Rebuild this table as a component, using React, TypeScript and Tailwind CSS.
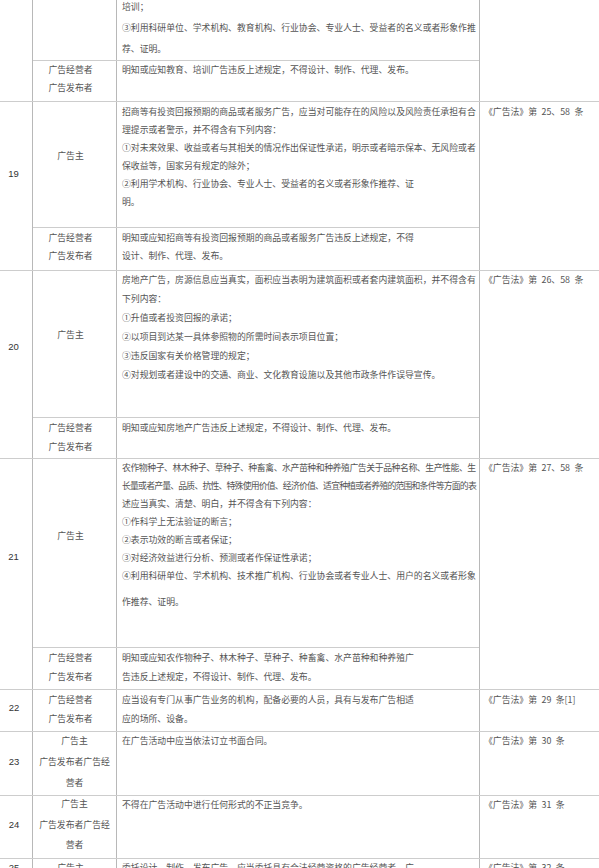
import React from "react";

const txt = "text-[8.85px] text-[#555] whitespace-nowrap";
const sp = "\u2002";

export default function App() {
  return (
    <div className="w-[599px] overflow-hidden bg-white font-['Noto_Sans_CJK_SC','Noto_Sans_CJK_JP',sans-serif]">
      <div className="w-[680px] flex flex-col">
        {/* Group 18 tail */}
        <div className="flex">
          <div className="w-[33px] shrink-0 border-r border-r-[#b8b8b8]" />
          <div className="w-[447px] shrink-0 border-r border-r-[#b8b8b8] flex flex-col">
            <div className="flex h-[60px]">
              <div className="w-[84px] shrink-0 border-r border-r-[#b8b8b8]" />
              <div className={`flex-1 pl-[5px] leading-[21px] -mt-[4px] ${txt}`}>
                <div>培训；</div>
                <div>③利用科研单位、学术机构、教育机构、行业协会、专业人士、受益者的名义或者形象作推</div>
                <div>荐、证明。</div>
              </div>
            </div>
            <div className="flex h-[41px] border-t border-t-[#cdcdcd]">
              <div className={`w-[84px] shrink-0 border-r border-r-[#b8b8b8] text-center pr-[8px] leading-[18px] ${txt}`}>
                <div>广告经营者</div>
                <div>广告发布者</div>
              </div>
              <div className={`flex-1 pl-[5px] leading-[18px] ${txt}`}>
                <div>明知或应知教育、培训广告违反上述规定，不得设计、制作、代理、发布。</div>
              </div>
            </div>
          </div>
          <div className="flex-1" />
        </div>

        {/* Group 19 */}
        <div className="flex border-t border-t-[#cdcdcd]">
          <div className="w-[33px] shrink-0 border-r border-r-[#b8b8b8] text-center pr-[5px] pt-[63px] leading-[18px] text-[9.5px] text-[#333] font-['Liberation_Sans',sans-serif]">19</div>
          <div className="w-[447px] shrink-0 border-r border-r-[#b8b8b8] flex flex-col">
            <div className="flex h-[125px]">
              <div className={`w-[84px] shrink-0 border-r border-r-[#b8b8b8] text-center pr-[8px] pt-[45px] leading-[18px] ${txt}`}>广告主</div>
              <div className={`flex-1 pl-[5px] pt-[1px] leading-[18px] ${txt}`}>
                <div>招商等有投资回报预期的商品或者服务广告，应当对可能存在的风险以及风险责任承担有合</div>
                <div>理提示或者警示，并不得含有下列内容：</div>
                <div>①对未来效果、收益或者与其相关的情况作出保证性承诺，明示或者暗示保本、无风险或者</div>
                <div>保收益等，国家另有规定的除外；</div>
                <div>②利用学术机构、行业协会、专业人士、受益者的名义或者形象作推荐、证</div>
                <div>明。</div>
              </div>
            </div>
            <div className="flex h-[43px] border-t border-t-[#cdcdcd]">
              <div className={`w-[84px] shrink-0 border-r border-r-[#b8b8b8] text-center pr-[8px] pt-[1px] leading-[18px] ${txt}`}>
                <div>广告经营者</div>
                <div>广告发布者</div>
              </div>
              <div className={`flex-1 pl-[5px] pt-[1px] leading-[18px] ${txt}`}>
                <div>明知或应知招商等有投资回报预期的商品或者服务广告违反上述规定，不得</div>
                <div>设计、制作、代理、发布。</div>
              </div>
            </div>
          </div>
          <div className={`flex-1 pl-[4px] pt-[1px] leading-[18px] ${txt}`}>《广告法》第{sp}25、58{sp}条</div>
        </div>

        {/* Group 20 */}
        <div className="flex border-t border-t-[#cdcdcd]">
          <div className="w-[33px] shrink-0 border-r border-r-[#b8b8b8] text-center pr-[5px] pt-[67px] leading-[18px] text-[9.5px] text-[#333] font-['Liberation_Sans',sans-serif]">20</div>
          <div className="w-[447px] shrink-0 border-r border-r-[#b8b8b8] flex flex-col">
            <div className="flex h-[146px]">
              <div className={`w-[84px] shrink-0 border-r border-r-[#b8b8b8] text-center pr-[8px] pt-[55px] leading-[18px] ${txt}`}>广告主</div>
              <div className={`flex-1 pl-[5px] -mt-[1px] leading-[19px] ${txt}`}>
                <div>房地产广告，房源信息应当真实，面积应当表明为建筑面积或者套内建筑面积，并不得含有</div>
                <div>下列内容：</div>
                <div>①升值或者投资回报的承诺；</div>
                <div>②以项目到达某一具体参照物的所需时间表示项目位置；</div>
                <div>③违反国家有关价格管理的规定；</div>
                <div>④对规划或者建设中的交通、商业、文化教育设施以及其他市政条件作误导宣传。</div>
              </div>
            </div>
            <div className="flex h-[41px] border-t border-t-[#cdcdcd]">
              <div className={`w-[84px] shrink-0 border-r border-r-[#b8b8b8] text-center pr-[8px] leading-[19px] ${txt}`}>
                <div>广告经营者</div>
                <div>广告发布者</div>
              </div>
              <div className={`flex-1 pl-[5px] leading-[19px] ${txt}`}>
                <div>明知或应知房地产广告违反上述规定，不得设计、制作、代理、发布。</div>
              </div>
            </div>
          </div>
          <div className={`flex-1 pl-[4px] leading-[18px] ${txt}`}>《广告法》第{sp}26、58{sp}条</div>
        </div>

        {/* Group 21 */}
        <div className="flex border-t border-t-[#cdcdcd]">
          <div className="w-[33px] shrink-0 border-r border-r-[#b8b8b8] text-center pr-[5px] pt-[89px] leading-[18px] text-[9.5px] text-[#333] font-['Liberation_Sans',sans-serif]">21</div>
          <div className="w-[447px] shrink-0 border-r border-r-[#b8b8b8] flex flex-col">
            <div className="flex h-[188px]">
              <div className={`w-[84px] shrink-0 border-r border-r-[#b8b8b8] text-center pr-[8px] pt-[68px] leading-[18px] ${txt}`}>广告主</div>
              <div className={`flex-1 pl-[5px] leading-[18px] ${txt}`}>
                <div className="tracking-[-0.42px]">农作物种子、林木种子、草种子、种畜禽、水产苗种和种养殖广告关于品种名称、生产性能、生</div>
                <div className="tracking-[-0.8px]">长量或者产量、品质、抗性、特殊使用价值、经济价值、适宜种植或者养殖的范围和条件等方面的表</div>
                <div>述应当真实、清楚、明白，并不得含有下列内容：</div>
                <div>①作科学上无法验证的断言；</div>
                <div>②表示功效的断言或者保证；</div>
                <div>③对经济效益进行分析、预测或者作保证性承诺；</div>
                <div>④利用科研单位、学术机构、技术推广机构、行业协会或者专业人士、用户的名义或者形象</div>
                <div className="mt-[8px]">作推荐、证明。</div>
              </div>
            </div>
            <div className="flex h-[42px] border-t border-t-[#cdcdcd]">
              <div className={`w-[84px] shrink-0 border-r border-r-[#b8b8b8] text-center pr-[8px] leading-[19px] ${txt}`}>
                <div>广告经营者</div>
                <div>广告发布者</div>
              </div>
              <div className={`flex-1 pl-[5px] leading-[19px] ${txt}`}>
                <div>明知或应知农作物种子、林木种子、草种子、种畜禽、水产苗种和种养殖广</div>
                <div>告违反上述规定，不得设计、制作、代理、发布。</div>
              </div>
            </div>
          </div>
          <div className={`flex-1 pl-[4px] leading-[18px] ${txt}`}>《广告法》第{sp}27、58{sp}条</div>
        </div>

        {/* Group 22 */}
        <div className="flex border-t border-t-[#cdcdcd] h-[42px]">
          <div className="w-[33px] shrink-0 border-r border-r-[#b8b8b8] text-center pr-[4px] pt-[9px] leading-[18px] text-[9.5px] text-[#333] font-['Liberation_Sans',sans-serif]">22</div>
          <div className="w-[447px] shrink-0 border-r border-r-[#b8b8b8] flex">
            <div className={`w-[84px] shrink-0 border-r border-r-[#b8b8b8] text-center pr-[8px] leading-[19px] ${txt}`}>
              <div>广告经营者</div>
              <div>广告发布者</div>
            </div>
            <div className={`flex-1 pl-[5px] leading-[19px] ${txt}`}>
              <div>应当设有专门从事广告业务的机构，配备必要的人员，具有与发布广告相适</div>
              <div>应的场所、设备。</div>
            </div>
          </div>
          <div className={`flex-1 pl-[4px] leading-[19px] ${txt}`}>《广告法》第{sp}29{sp}条[1]</div>
        </div>

        {/* Group 23 */}
        <div className="flex border-t border-t-[#cdcdcd] h-[64px]">
          <div className="w-[33px] shrink-0 border-r border-r-[#b8b8b8] text-center pr-[4px] pt-[21px] leading-[18px] text-[9.5px] text-[#333] font-['Liberation_Sans',sans-serif]">23</div>
          <div className="w-[447px] shrink-0 border-r border-r-[#b8b8b8] flex">
            <div className={`w-[84px] shrink-0 border-r border-r-[#b8b8b8] text-center leading-[21px] ${txt}`}>
              <div className="-mt-[2px]">广告主</div>
              <div>广告发布者广告经</div>
              <div>营者</div>
            </div>
            <div className={`flex-1 pl-[5px] leading-[18px] ${txt}`}>
              <div>在广告活动中应当依法订立书面合同。</div>
            </div>
          </div>
          <div className={`flex-1 pl-[4px] leading-[18px] ${txt}`}>《广告法》第{sp}30{sp}条</div>
        </div>

        {/* Group 24 */}
        <div className="flex border-t border-t-[#cdcdcd] h-[63px]">
          <div className="w-[33px] shrink-0 border-r border-r-[#b8b8b8] text-center pr-[4px] pt-[20px] leading-[18px] text-[9.5px] text-[#333] font-['Liberation_Sans',sans-serif]">24</div>
          <div className="w-[447px] shrink-0 border-r border-r-[#b8b8b8] flex">
            <div className={`w-[84px] shrink-0 border-r border-r-[#b8b8b8] text-center leading-[20.5px] ${txt}`}>
              <div className="-mt-[2px]">广告主</div>
              <div>广告发布者广告经</div>
              <div>营者</div>
            </div>
            <div className={`flex-1 pl-[5px] leading-[18px] ${txt}`}>
              <div>不得在广告活动中进行任何形式的不正当竞争。</div>
            </div>
          </div>
          <div className={`flex-1 pl-[4px] leading-[18px] ${txt}`}>《广告法》第{sp}31{sp}条</div>
        </div>

        {/* Group 25 */}
        <div className="flex border-t border-t-[#cdcdcd] h-[40px]">
          <div className="w-[33px] shrink-0 border-r border-r-[#b8b8b8] text-center pr-[4px] leading-[18px] text-[9.5px] text-[#333] font-['Liberation_Sans',sans-serif]">25</div>
          <div className="w-[447px] shrink-0 border-r border-r-[#b8b8b8] flex">
            <div className={`w-[84px] shrink-0 border-r border-r-[#b8b8b8] text-center pr-[8px] leading-[18px] ${txt}`}>广告主</div>
            <div className={`flex-1 pl-[5px] leading-[18px] ${txt}`}>
              <div>委托设计、制作、发布广告，应当委托具有合法经营资格的广告经营者、广</div>
            </div>
          </div>
          <div className={`flex-1 pl-[4px] leading-[18px] ${txt}`}>《广告法》第{sp}32{sp}条</div>
        </div>
      </div>
    </div>
  );
}
